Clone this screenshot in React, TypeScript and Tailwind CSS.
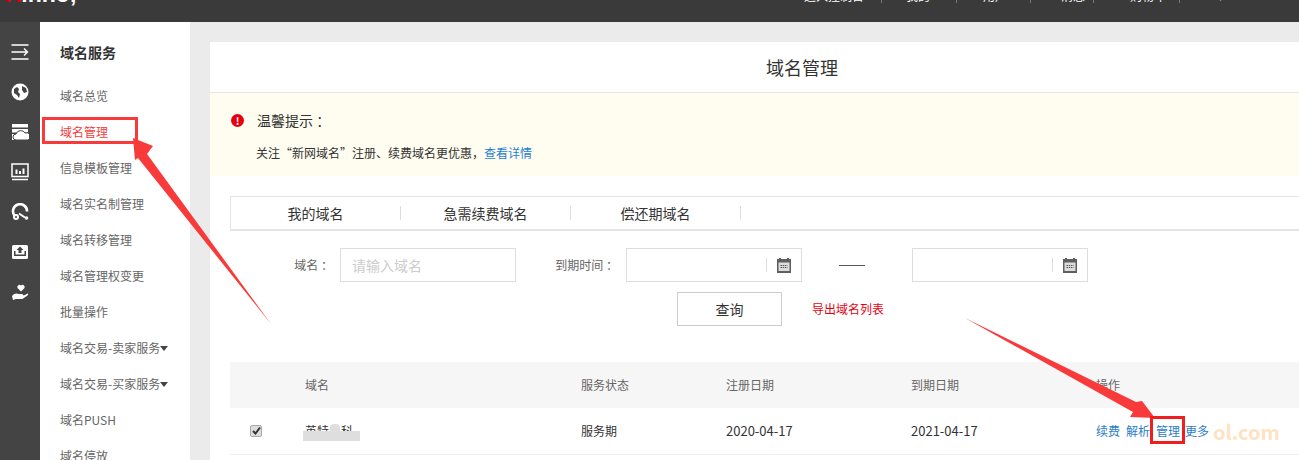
const font = { fontFamily: '"Noto Sans CJK SC", sans-serif' }

const menu = ['域名总览', '域名管理', '信息模板管理', '域名实名制管理', '域名转移管理', '域名管理权变更', '批量操作', '域名交易-卖家服务', '域名交易-买家服务', '域名PUSH', '域名停放']
const topLinks = [
  { label: '进入控制台', cls: 'w-[99px] pl-[21px]' },
  { label: '我的', cls: 'w-[75px] pl-[24px]' },
  { label: '用户', cls: 'w-[74px] pl-[26px]' },
  { label: '消息', cls: 'w-[63px] pl-[30px]' },
  { label: '购物车', cls: 'w-[86px] pl-[36px]' },
]

function RailIcons() {
  return (
    <div className="flex flex-col items-center pt-[21px] gap-[22px] text-white">
      <svg width="18" height="18" viewBox="0 0 18 18" fill="none" stroke="currentColor" strokeWidth="1.4">
        <path d="M0.500 2h17M0.500 16h17M0.500 9h15M13 5.500l3.500 3.500-3.500 3.500" />
      </svg>
      <svg width="18" height="18" viewBox="0 0 18 18">
        <circle cx="9" cy="9" r="8.500" fill="currentColor" />
        <path d="M3 6l3-2 2 2-1 3 2 2-1 4-2-3-3-2zM11 3l4 2 1 4-3 1-2-3z" fill="#444" />
      </svg>
      <svg width="18" height="18" viewBox="0 0 18 18">
        <path d="M1 1h16v3.500H1zM1 6h16v3.500H1zM1 11h3v6H1z" fill="currentColor" />
        <path d="M5 17a3 3 0 0 1 0-6a5 5 0 0 1 9-1a3.500 3.500 0 0 1 3 7z" fill="currentColor" stroke="#444" />
      </svg>
      <svg width="18" height="18" viewBox="0 0 18 18" fill="none" stroke="currentColor">
        <rect x="1" y="1" width="16" height="12.500" strokeWidth="1.500" />
        <path d="M1 16.500h16" strokeWidth="1.500" />
        <path d="M5.500 11V6.500M9 11V8M12.500 11V5.500" strokeWidth="2" />
      </svg>
      <svg width="18" height="18" viewBox="0 0 18 18" fill="none" stroke="currentColor" strokeWidth="2.600">
        <path d="M3.500 12.500A7 7 0 1 1 16 8.500" />
        <path d="M8 10.500l6 4" strokeWidth="2" />
        <circle cx="5" cy="14" r="2" strokeWidth="2" />
        <circle cx="15.500" cy="15" r="1" strokeWidth="1.600" />
      </svg>
      <svg width="18" height="18" viewBox="0 0 18 18">
        <rect x="1" y="2" width="16" height="14" rx="1.500" fill="currentColor" />
        <path d="M9 3.500l3.500 3.500H10.500v3h-3V7H5.500zM3 8h1.500v3.500h9V8H15v5H3z" fill="#444" />
      </svg>
      <svg width="18" height="18" viewBox="0 0 18 18" fill="currentColor">
        <path d="M10 8.500L6.500 5a2.200 2.200 0 0 1 3.500-2.500A2.200 2.200 0 0 1 13.500 5z" />
        <path d="M1 13c2-3 5-3 7-2h3a1 1 0 0 1 0 2H8.500l5.500-1 2.500-1.500c1 0 1 1 0 2l-5 3.500H5l-3 1z" />
      </svg>
    </div>
  )
}

function CalendarIcon() {
  return (
    <svg width="14" height="15" viewBox="0 0 14 15">
      <path d="M0 1h2V0h2v1h6V0h2v1h2v14H0z" fill="#5f5f5f" />
      <rect x="1.500" y="4.500" width="11" height="8.500" fill="#dcdcdc" />
      <path d="M3.500 7.500h7M3.500 9.500h7" stroke="#555" strokeDasharray="1.500 .7" />
    </svg>
  )
}

function DateInput() {
  return (
    <div className="w-[176px] h-[34px] border border-[#ddd] flex items-center justify-end">
      <span className="h-[14px] border-l border-[#ddd]" />
      <span className="mx-[10px] flex"><CalendarIcon /></span>
    </div>
  )
}

function Arrows() {
  return (
    <svg className="absolute left-0 top-0 pointer-events-none" width="1299" height="460" viewBox="0 0 1299 460">
      <path d="M271 324L147 154L153 146L133 138L135 160L138 158z" fill="#f93a3a" />
      <path d="M965 318L1136 402L1142 401L1155 418L1130 417L1133 412z" fill="#f93a3a" />
      <rect x="43.500" y="118.500" width="93" height="24" fill="none" stroke="#f93a3a" strokeWidth="3" />
      <rect x="1151.500" y="417.500" width="32" height="25" fill="none" stroke="#f01f1f" strokeWidth="3" />
    </svg>
  )
}

export default function App() {
  return (
    <div style={font} className="relative w-[1299px] h-[460px] overflow-hidden bg-[#ebebeb] text-[12px]">
      <header className="h-[22px] bg-[#3a3a3a] overflow-hidden relative flex justify-between">
        <div className="-mt-[18px] ml-[6px] font-['Liberation_Sans',sans-serif] text-[23px] leading-[24px] font-bold text-white whitespace-nowrap">
          <span className="text-[#e60012]">X</span>inno,
        </div>
        <div className="w-[516px] flex items-start text-white">
          {topLinks.map(l => (
            <div key={l.label} className={`${l.cls} h-[3px] border-r border-[#777] overflow-hidden`}>
              <div className="-mt-[11px] leading-[14px] whitespace-nowrap">{l.label}</div>
            </div>
          ))}
          <div className="ml-[37px] h-[2px] overflow-hidden text-[#c8963c]">
            <div className="-mt-[11px] leading-[14px]">¥</div>
          </div>
        </div>
      </header>

      <div className="flex h-[438px]">
        <aside className="w-[40px] bg-[#444] shrink-0"><RailIcons /></aside>

        <nav className="w-[150px] bg-white shrink-0 pl-[20px] text-[#666]">
          <div className="h-[62px] pt-[20px] text-[14px] leading-[20px] font-bold text-[#333]">域名服务</div>
          <ul>
            {menu.map((m, i) => (
              <li key={m} className={`h-[36px] leading-[24px] whitespace-nowrap ${i === 1 ? 'text-[#f23c3c]' : ''}`}>
                {m}
                {i === 7 || i === 8 ? <span className="inline-block align-[2px] border-x-[4px] border-t-[5px] border-x-transparent border-t-[#444]" /> : null}
              </li>
            ))}
          </ul>
        </nav>

        <main className="flex-1 pl-[20px] pt-[20px]">
          <div className="bg-white h-full">
            <h1 className="h-[51px] border-b border-[#e5e5e5] pl-[95px] text-center text-[18px] font-normal leading-[50px] text-[#333]">域名管理</h1>

            <div className="h-[83px] bg-[#fffdf0] pl-[21px] pt-[16px] text-[#333]">
              <div className="flex items-center h-[22px] text-[14px]">
                <span className="w-[13px] h-[13px] rounded-full bg-[#e60012] text-white text-[10px] leading-[13px] font-bold text-center">!</span>
                <span className="ml-[13px]">温馨提示 ：</span>
              </div>
              <div className="mt-[12px] ml-[25px] leading-[20px]">
                关注“新网域名”注册、续费域名更优惠，<a className="text-[#1e7fd6]">查看详情</a>
              </div>
            </div>

            <div className="pl-[20px] pt-[20px]">
              <div className="h-[35px] flex items-center border border-r-0 border-[#e5e5e5] border-b-2 text-[14px] text-[#333]">
                {['我的域名', '急需续费域名', '偿还期域名'].map(t => (
                  <span key={t} className="w-[170px] h-[14px] leading-[14px] border-r border-[#ddd] text-center whitespace-nowrap">{t}</span>
                ))}
              </div>

              <div className="flex items-center mt-[17px] text-[#666]">
                <span className="w-[110px] text-right pr-[7px]">域名 ：</span>
                <div className="w-[176px] h-[34px] border border-[#ddd] pl-[11px] leading-[32px] text-[#ccc] text-[14px]">请输入域名</div>
                <span className="w-[110px] text-right pr-[8px]">到期时间 ：</span>
                <DateInput />
                <span className="w-[110px] flex pl-[37px]"><span className="w-[26px] border-t border-[#555]" /></span>
                <DateInput />
              </div>

              <div className="flex items-center mt-[10px] ml-[447px]">
                <button className="w-[105px] h-[34px] border border-[#ccc] text-[14px] text-[#333]">查询</button>
                <a className="ml-[30px] text-[#e60012]">导出域名列表</a>
              </div>

              <table className="mt-[36px] w-full table-fixed text-left">
                <thead>
                  <tr className="h-[46px] bg-[#f6f6f6] text-[#666]">
                    <th className="w-[75px] font-normal" />
                    <th className="w-[276px] font-normal">域名</th>
                    <th className="w-[145px] font-normal">服务状态</th>
                    <th className="w-[185px] font-normal">注册日期</th>
                    <th className="w-[185px] font-normal">到期日期</th>
                    <th className="font-normal">操作</th>
                  </tr>
                </thead>
                <tbody>
                  <tr className="h-[46px] border-b border-[#eee] text-[#333]">
                    <td className="pl-[20px]">
                      <span className="flex w-[12px] h-[12px] items-center justify-center rounded-[2px] border border-[#aaa] bg-[#dcdcdc]">
                        <svg width="9" height="9" viewBox="0 0 9 9" fill="none" stroke="#333" strokeWidth="2"><path d="M1 5l2.500 2.500L8 1.500" /></svg>
                      </span>
                    </td>
                    <td>
                      <span className="relative inline-block">
                        英特<span className="ml-[12px]">科</span>
                        <span className="absolute left-[-2px] top-[9px] w-[57px] h-[10px] bg-[#dedede]" />
                        <span className="absolute left-[25px] top-[2px] w-[10px] h-[8px] rounded-t-[4px] bg-[#dedede]" />
                      </span>
                    </td>
                    <td>服务期</td>
                    <td className="text-[13px]">2020-04-17</td>
                    <td className="text-[13px]">2021-04-17</td>
                    <td className="relative whitespace-nowrap text-[#2b7dc9]">
                      <span>续费</span><span className="ml-[6px]">解析</span><span className="ml-[6px]">管理</span><span className="ml-[5px]">更多</span>
                    </td>
                  </tr>
                </tbody>
              </table>
            </div>
          </div>
        </main>
      </div>

      <span className="absolute left-[1213px] top-[418px] text-[20px] leading-[28px] font-bold text-[#fde3c4]">ol.com</span>
      <Arrows />
    </div>
  )
}
